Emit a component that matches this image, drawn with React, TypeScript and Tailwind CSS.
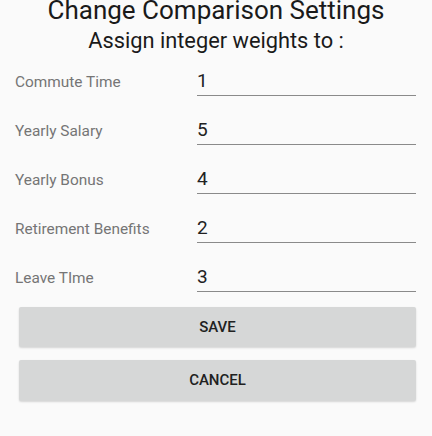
const weights = [
  { label: "Commute Time", value: "1" },
  { label: "Yearly Salary", value: "5" },
  { label: "Yearly Bonus", value: "4" },
  { label: "Retirement Benefits", value: "2" },
  { label: "Leave TIme", value: "3" },
];

function WeightRow({ label, value }: { label: string; value: string }) {
  return (
    <div className="flex h-[49px] items-start">
      <div className="w-[197px] pl-[15px] pt-[22px] text-[15.4px] leading-[20px] text-[#757575]">
        {label}
      </div>
      <div className="w-[219px] pt-[20px]">
        <div className="border-b-[1.5px] border-[#8a8a8a] pb-[3px] text-[19px] leading-[22px] text-[#212121]">
          {value}
        </div>
      </div>
    </div>
  );
}

export default function App() {
  return (
    <div
      className="h-[436px] w-[432px] overflow-hidden bg-[#fafafa]"
      style={{ fontFamily: "Roboto, 'Noto Sans', sans-serif" }}
    >
      <h1 className="-mt-[5px] text-center text-[26px] leading-[30px] text-[#1a1a1a]">
        Change Comparison Settings
      </h1>
      <h2 className="mt-[3px] text-center text-[21.8px] leading-[26px] text-[#1a1a1a]">
        Assign integer weights to :
      </h2>

      <div className="mt-[-4px]">
        {weights.map((w) => (
          <WeightRow key={w.label} label={w.label} value={w.value} />
        ))}
      </div>

      <div className="mt-[12px] flex flex-col gap-[13px] pl-[19px] pr-[16px]">
        <button className="h-[40px] rounded-[2px] bg-[#d6d7d7] text-[15px] font-medium text-[#212121] shadow-[0_1px_2px_rgba(0,0,0,0.15)]">
          SAVE
        </button>
        <button className="h-[41px] rounded-[2px] bg-[#d6d7d7] text-[15px] font-medium text-[#212121] shadow-[0_1px_2px_rgba(0,0,0,0.15)]">
          CANCEL
        </button>
      </div>
    </div>
  );
}
